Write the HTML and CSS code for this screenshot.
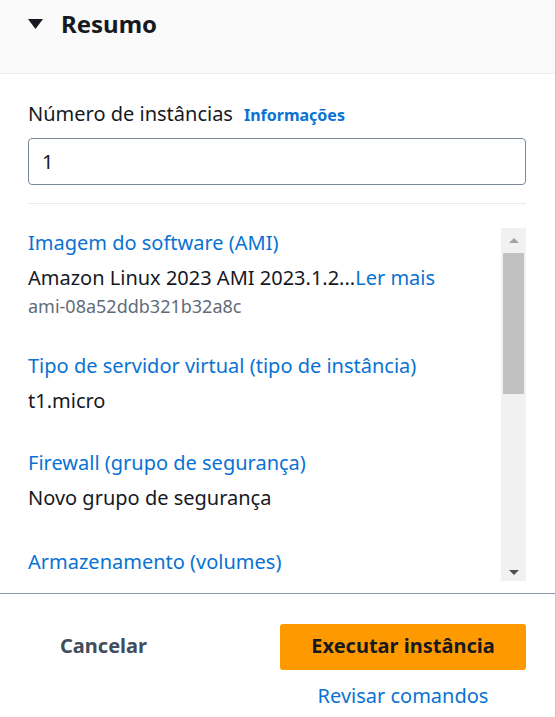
FILE: index.html
```html
<!DOCTYPE html>
<html lang="pt-BR">
<head>
<meta charset="utf-8">
<title>Resumo</title>
<link rel="stylesheet" href="styles.css">
</head>
<body>
<div class="panel">
  <header class="panel-header">
    <svg class="caret" width="15" height="10" viewBox="0 0 15 10" aria-hidden="true"><path d="M0 0 H15 L7.5 10 Z" fill="#16191f"/></svg>
    <h2 class="title">Resumo</h2>
  </header>

  <div class="panel-body">
    <div class="field">
      <div class="field-label">
        <span>Número de instâncias</span>
        <a class="info-link">Informações</a>
      </div>
      <div class="input">1</div>
    </div>
    <div class="divider"></div>

    <div class="scroller">
      <div class="scroll-content">
        <div class="item">
          <a class="item-title">Imagem do software (AMI)</a>
          <div class="item-value">Amazon Linux 2023 AMI 2023.1.2...<a class="inline-link">Ler mais</a></div>
          <div class="item-id">ami-08a52ddb321b32a8c</div>
        </div>
        <div class="item">
          <a class="item-title">Tipo de servidor virtual (tipo de instância)</a>
          <div class="item-value">t1.micro</div>
        </div>
        <div class="item">
          <a class="item-title">Firewall (grupo de segurança)</a>
          <div class="item-value">Novo grupo de segurança</div>
        </div>
        <div class="item item-last">
          <a class="item-title">Armazenamento (volumes)</a>
        </div>
      </div>
      <div class="scrollbar">
        <div class="sb-btn"><span class="arrow-up"></span></div>
        <div class="sb-thumb"></div>
        <div class="sb-space"></div>
        <div class="sb-btn sb-btn-down"><span class="arrow-down"></span></div>
      </div>
    </div>
  </div>

  <footer class="panel-footer">
    <button class="btn-cancel">Cancelar</button>
    <div class="primary-group">
      <button class="btn-primary">Executar instância</button>
      <a class="review-link">Revisar comandos</a>
    </div>
  </footer>
</div>
</body>
</html>
```

FILE: styles.css
```css
* { box-sizing: border-box; }

html, body {
  margin: 0;
  padding: 0;
  background: #ffffff;
}

body {
  font-family: "Noto Sans", "Open Sans", Arial, sans-serif;
  color: #16191f;
  font-size: 20px;
  line-height: 28px;
}

.panel {
  width: 556px;
  height: 717px;
  border-right: 1px solid #c6c6cd;
  display: flex;
  flex-direction: column;
  overflow: hidden;
}

.panel-header {
  height: 74px;
  background: #fafafa;
  border-bottom: 1px solid #e9ebed;
  display: flex;
  align-items: flex-start;
  padding: 9px 0 0 28px;
  flex-shrink: 0;
}

.caret {
  margin-top: 10px;
  flex-shrink: 0;
}

.title {
  margin: 0 0 0 18px;
  font-size: 24px;
  line-height: 30px;
  font-weight: 700;
  color: #16191f;
}

.panel-body {
  padding: 26px 29px 0 28px;
  flex-shrink: 0;
}

.field-label {
  display: flex;
  align-items: baseline;
  gap: 11px;
}

.info-link {
  color: #0972d3;
  font-weight: 700;
  font-size: 16px;
}

.input {
  margin-top: 9px;
  height: 47px;
  border: 1px solid #7d8998;
  border-radius: 4px;
  padding: 0 13px;
  display: flex;
  align-items: center;
}

.divider {
  margin-top: 18px;
  height: 1px;
  background: #e9ebed;
}

.scroller {
  margin-top: 24px;
  height: 353px;
  display: flex;
  overflow: hidden;
}

.scroll-content {
  flex: 1;
  padding-top: 1px;
  overflow: hidden;
}

.item + .item {
  margin-top: 34px;
}

.item-last {
  padding-top: 2px;
}

.item-title {
  display: block;
  color: #0972d3;
}

.item-value {
  margin-top: 7px;
}

.inline-link {
  color: #0972d3;
}

.item-id {
  margin-top: 2px;
  font-size: 18px;
  line-height: 24px;
  color: #5f6b7a;
}

.scrollbar {
  width: 25px;
  flex-shrink: 0;
  background: #f1f1f1;
  display: flex;
  flex-direction: column;
  align-items: center;
}

.sb-btn {
  height: 25px;
  width: 100%;
  display: flex;
  align-items: center;
  justify-content: center;
  flex-shrink: 0;
}

.arrow-up {
  width: 0;
  height: 0;
  border-left: 5px solid transparent;
  border-right: 5px solid transparent;
  border-bottom: 5px solid #a3a3a3;
}

.arrow-down {
  width: 0;
  height: 0;
  border-left: 5px solid transparent;
  border-right: 5px solid transparent;
  border-top: 5px solid #505050;
}

.sb-btn-down {
  align-items: flex-end;
  padding-bottom: 6px;
}

.sb-thumb {
  width: 21px;
  height: 141px;
  background: #c1c1c1;
  flex-shrink: 0;
}

.sb-space {
  flex: 1;
}

.panel-footer {
  margin-top: 12px;
  border-top: 1px solid #8d99a8;
  display: flex;
  align-items: flex-start;
  padding: 30px 29px 0 28px;
}

.btn-cancel {
  font-family: inherit;
  background: none;
  border: none;
  padding: 0 32px 3px;
  height: 46px;
  font-size: 20px;
  font-weight: 700;
  color: #414d5c;
}

.primary-group {
  margin-left: auto;
  display: flex;
  flex-direction: column;
  align-items: center;
}

.btn-primary {
  font-family: inherit;
  width: 246px;
  height: 46px;
  padding: 0 0 3px;
  background: #ff9900;
  border: none;
  border-radius: 3px;
  font-size: 20px;
  font-weight: 700;
  color: #16191f;
}

.review-link {
  margin-top: 12px;
  color: #0972d3;
}
```
